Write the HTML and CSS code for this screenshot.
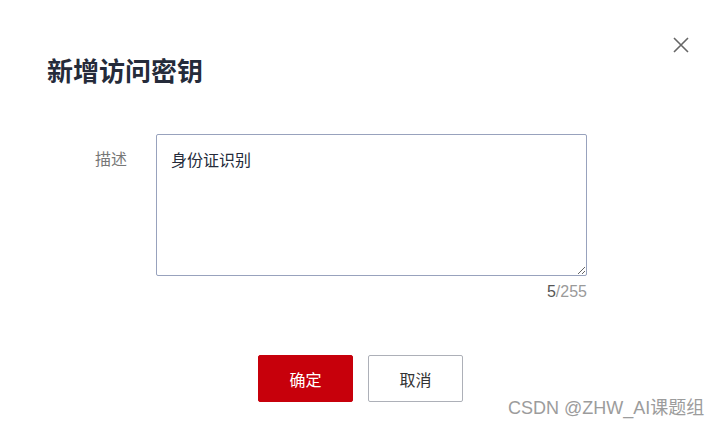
FILE: index.html
```html
<!DOCTYPE html>
<html lang="zh-CN">
<head>
    <meta charset="UTF-8">
    <meta name="viewport" content="width=device-width, initial-scale=1.0">
    <title>新增访问密钥</title>
    <link rel="stylesheet" href="styles.css">
</head>
<body>
    <div class="dialog">
        <div class="dialog-header">
            <h1 class="dialog-title">新增访问密钥</h1>
            <button class="close-btn" aria-label="关闭">
                <svg width="18" height="18" viewBox="0 0 18 18">
                    <path d="M2 2 L16 16 M16 2 L2 16" stroke="#666" stroke-width="1.6" fill="none"/>
                </svg>
            </button>
        </div>

        <div class="form-row">
            <label class="form-label" for="desc">描述</label>
            <div class="form-field">
                <textarea id="desc" class="desc-input">身份证识别</textarea>
                <div class="counter"><span class="count-now">5</span>/255</div>
            </div>
        </div>

        <div class="dialog-footer">
            <button class="btn btn-primary">确定</button>
            <button class="btn btn-default">取消</button>
        </div>
    </div>

    <div class="watermark">CSDN @ZHW_AI课题组</div>
</body>
</html>
```

FILE: styles.css
```css
body {
    margin: 0;
    background: #fff;
    font-family: "Liberation Sans", "Noto Sans CJK SC", sans-serif;
    color: #252b3a;
    height: 428px;
    overflow: hidden;
    position: relative;
}

.dialog {
    padding: 36px 30px 0 47px;
}

.dialog-header {
    display: flex;
    justify-content: space-between;
    align-items: flex-start;
}

.dialog-title {
    margin: 16px 0 0;
    font-family: "Noto Sans CJK SC", sans-serif;
    font-size: 26px;
    line-height: 36px;
    font-weight: bold;
    color: #252b3a;
}

.close-btn {
    width: 18px;
    height: 18px;
    padding: 0;
    border: none;
    background: none;
    cursor: pointer;
}

.close-btn svg {
    display: block;
}

.form-row {
    display: flex;
    margin-top: 46px;
}

.form-label {
    width: 80px;
    padding-top: 12px;
    margin-right: 29px;
    text-align: right;
    font-family: "Noto Sans CJK SC", sans-serif;
    font-size: 16px;
    line-height: 24px;
    color: #777;
}

.form-field {
    width: 431px;
}

.desc-input {
    display: block;
    box-sizing: border-box;
    width: 431px;
    height: 142px;
    padding: 12px 14px;
    border: 1px solid #98a2bd;
    border-radius: 2px;
    font-family: "Noto Sans CJK SC", sans-serif;
    font-size: 16px;
    line-height: 24px;
    color: #252b3a;
    resize: vertical;
    outline: none;
}

.counter {
    margin-top: 6px;
    text-align: right;
    font-size: 16px;
    line-height: 20px;
    color: #9a9a9a;
}

.count-now {
    color: #555;
}

.dialog-footer {
    display: flex;
    justify-content: center;
    gap: 15px;
    margin-top: 53px;
    padding-right: 16px;
}

.btn {
    width: 95px;
    height: 47px;
    border-radius: 2px;
    font-family: "Noto Sans CJK SC", sans-serif;
    font-size: 16px;
    cursor: pointer;
}

.btn-primary {
    background: #c7000b;
    border: 1px solid #c7000b;
    color: #fff;
}

.btn-default {
    background: #fff;
    border: 1px solid #adb0b8;
    color: #333;
}

.watermark {
    position: absolute;
    left: 508px;
    top: 396px;
    font-size: 18px;
    line-height: 24px;
    color: #9c9c9c;
}
```
